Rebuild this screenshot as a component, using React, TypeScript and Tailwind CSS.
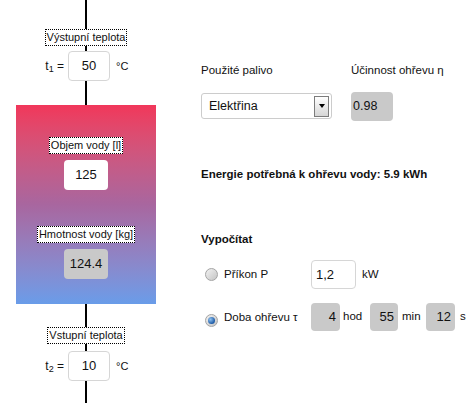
const font = { fontFamily: '"Liberation Sans", Arial, sans-serif' };

function Line({ h }: { h: string }) {
    return <div className={`w-[2px] bg-black ${h}`} />;
}

function Tag({ children }: { children: React.ReactNode }) {
    return (
        <div className="border border-dotted border-black bg-white px-[1px] text-[11px] leading-[15px] text-[#111]">
            {children}
        </div>
    );
}

function TempRow({ sub, value }: { sub: string; value: string }) {
    return (
        <div className="flex h-[30px] w-[172px] items-center">
            <div className="w-[68px] pr-[4px] text-right text-[12px] text-[#111]">
                t<sub className="text-[9px]">{sub}</sub> =
            </div>
            <div className="flex h-[30px] w-[42px] items-center justify-center rounded-[4px] border border-[#d6d6d6] bg-white text-[13px] text-[#111]">
                {value}
            </div>
            <div className="pl-[6px] text-[11px] text-[#111]">°C</div>
        </div>
    );
}

function Radio({ checked }: { checked?: boolean }) {
    return (
        <div className="flex h-[13px] w-[13px] items-center justify-center rounded-full border border-[#a4a4a4] bg-linear-to-br from-[#f2f2f2] to-[#c4c4c4]">
            {checked && (
                <div className="h-[7px] w-[7px] rounded-full bg-[radial-gradient(circle_at_35%_35%,#8fc2f0,#1d5aa6_70%)]" />
            )}
        </div>
    );
}

function GrayBox({ value, w }: { value: string; w: string }) {
    return (
        <div className={`flex h-[28px] items-center justify-end rounded-[4px] bg-[#c9c9c9] pr-[4px] text-[13px] text-[#111] ${w}`}>
            {value}
        </div>
    );
}

export default function App() {
    return (
        <div className="flex h-[415px] w-[470px] bg-white" style={font}>
            {/* schema bojleru */}
            <div className="flex w-[172px] flex-col items-center">
                <Line h="h-[29px]" />
                <Tag>Výstupní teplota</Tag>
                <Line h="h-[5px]" />
                <TempRow sub="1" value="50" />
                <Line h="h-[24px]" />
                <div className="flex h-[199px] w-[140px] flex-col items-center bg-linear-to-b from-[#f1365a] via-[#a8669f] to-[#699ce9] pt-[32px]">
                    <Tag>Objem vody [l]</Tag>
                    <div className="mt-[6px] flex h-[30px] w-[44px] items-center justify-center rounded-[4px] bg-white text-[13px] text-[#111]">
                        125
                    </div>
                    <div className="mt-[36px]">
                        <Tag>Hmotnost vody [kg]</Tag>
                    </div>
                    <div className="mt-[6px] flex h-[30px] w-[44px] items-center justify-center rounded-[4px] bg-[#c9c9c9] text-[13px] text-[#111]">
                        124.4
                    </div>
                </div>
                <Line h="h-[23px]" />
                <Tag>Vstupní teplota</Tag>
                <Line h="h-[7px]" />
                <TempRow sub="2" value="10" />
                <Line h="h-[22px]" />
            </div>

            {/* výpočet */}
            <div className="ml-[29px] flex flex-col text-[11.5px] text-[#111]">
                <div className="mt-[63px] flex">
                    <div className="w-[150px]">
                        <div className="leading-[14px]">Použité palivo</div>
                        <div className="mt-[16px] flex h-[26px] w-[131px] items-center justify-between rounded-[3px] border border-[#cccccc] bg-white pl-[7px] pr-[2px]">
                            <span className="text-[12.5px]">Elektřina</span>
                            <div className="flex h-[21px] w-[15px] items-center justify-center border border-[#7c7c7c] bg-linear-to-b from-white to-[#d6d6d6]">
                                <div className="h-0 w-0 border-x-[3px] border-t-[4px] border-x-transparent border-t-black" />
                            </div>
                        </div>
                    </div>
                    <div>
                        <div className="leading-[14px]">Účinnost ohřevu η</div>
                        <div className="mt-[15px] flex h-[29px] w-[42px] items-center rounded-[4px] bg-[#c9c9c9] pl-[2px] text-[12.5px]">
                            0.98
                        </div>
                    </div>
                </div>

                <div className="mt-[46px] text-[11.5px] font-bold leading-[14px]">
                    Energie potřebná k ohřevu vody: 5.9 kWh
                </div>

                <div className="mt-[51px] text-[11.5px] font-bold leading-[14px]">Vypočítat</div>

                <div className="mt-[14px] flex h-[29px] items-center">
                    <div className="ml-[4px] w-[19px]">
                        <Radio />
                    </div>
                    <div className="w-[87px]">Příkon P</div>
                    <div className="flex h-[29px] w-[45px] items-center rounded-[4px] border border-[#d6d6d6] bg-white pl-[4px] text-[13px]">
                        1,2
                    </div>
                    <div className="pl-[6px]">kW</div>
                </div>

                <div className="mt-[14px] flex h-[28px] items-center">
                    <div className="ml-[4px] mt-[6px] w-[19px]">
                        <Radio checked />
                    </div>
                    <div className="mt-[2px] w-[87px]">Doba ohřevu τ</div>
                    <GrayBox value="4" w="w-[29px]" />
                    <div className="w-[30px] pl-[3px]">hod</div>
                    <GrayBox value="55" w="w-[28px]" />
                    <div className="w-[28px] pl-[4px]">min</div>
                    <GrayBox value="12" w="w-[29px]" />
                    <div className="pl-[5px]">s</div>
                </div>
            </div>
        </div>
    );
}
